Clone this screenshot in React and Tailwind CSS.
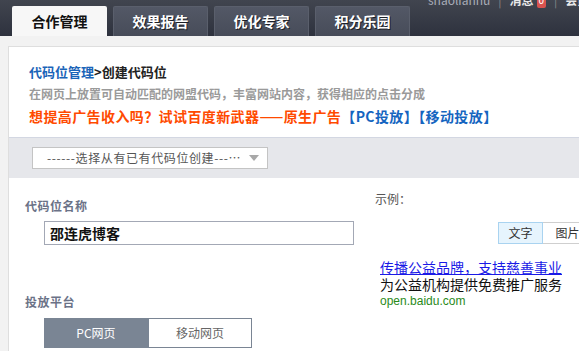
import React from "react";

const F = { fontFamily: '"Noto Sans CJK SC", "Noto Sans", sans-serif' };

function Tab({ label, active }) {
  return active ? (
    <div className="flex h-[30px] w-[95px] items-center justify-center rounded-t-[2px] bg-[#f7f7f7] text-[14px] font-bold text-[#111]">
      {label}
    </div>
  ) : (
    <div className="flex h-[30px] w-[95px] items-center justify-center rounded-t-[2px] border-x border-t border-[#5a5f6c] bg-gradient-to-b from-[#535866] to-[#474c59] text-[14px] font-bold text-white [text-shadow:1px_1px_0_#1c1f27]">
      {label}
    </div>
  );
}

export default function App() {
  return (
    <div className="relative h-[351px] w-[579px] overflow-hidden bg-[#f2f2f2]" style={F}>
      {/* header */}
      <div className="relative h-[36px] bg-gradient-to-b from-[#41454f] to-[#2e323e]">
        <div className="flex h-full items-end gap-[6px] pl-[12px]">
          <Tab label="合作管理" active />
          <Tab label="效果报告" />
          <Tab label="优化专家" />
          <Tab label="积分乐园" />
        </div>
        <div className="absolute left-[428px] top-[-8px] flex items-center gap-[8px] whitespace-nowrap text-[12px] leading-[16px] text-[#a9adb8]">
          <span>shaolianhu</span>
          <span className="text-[#888]">|</span>
          <span className="flex items-center gap-[3px] font-bold text-[#e8e8e8]">
            消息
            <span className="rounded-[2px] bg-[#d9534f] px-[2px] text-[10px] font-normal text-white">0</span>
          </span>
          <span className="text-[#888]">|</span>
          <span className="font-bold text-[#e8e8e8]">会员中心</span>
        </div>
      </div>

      {/* body */}
      <div className="pl-[8px] pt-[10px]">
        <div className="h-[320px] border-l border-t border-[#dedede] bg-white">
          <div className="pl-[20px] pt-[16px]">
            <div className="text-[13px] font-bold leading-[17px] text-[#222]">
              <span className="text-[#1a64b8]">代码位管理</span>&gt;创建代码位
            </div>
            <div className="mt-[6px] text-[12px] font-bold leading-[16px] text-[#9a9a9a]">
              在网页上放置可自动匹配的网盟代码，丰富网站内容，获得相应的点击分成
            </div>
            <div className="mt-[5px] whitespace-nowrap text-[14px] font-bold leading-[18px] tracking-[0.4px] text-[#ff4a00]">
              想提高广告收入吗？试试百度新武器——原生广告
              <span className="text-[#1565c0]">【PC投放】【移动投放】</span>
            </div>
          </div>

          {/* band with select */}
          <div className="mt-[12px] h-[41px] border-t border-[#d3d7e2] bg-[#e6e7eb] pl-[23px] pt-[9px]">
            <div className="flex h-[22px] w-[236px] items-center justify-between border border-[#c4c4c4] bg-white pl-[14px] pr-[8px] text-[12px] text-[#555]">
              <span className="whitespace-nowrap tracking-[0.6px]">------选择从有已有代码位创建---…</span>
              <svg width="10" height="6" viewBox="0 0 10 6">
                <path d="M0 0 L10 0 L5 6 Z" fill="#a8a8a8" />
              </svg>
            </div>
          </div>

          {/* form area */}
          <div className="flex">
            <div className="w-[359px] shrink-0 pl-[16px]">
              <div className="mt-[20px] text-[12px] font-bold leading-[16px] tracking-[0.5px] text-[#6b7287]">代码位名称</div>
              <div className="ml-[19px] mt-[7px] flex h-[24px] w-[310px] items-center border border-[#a3a8b5] pl-[5px] text-[14px] font-bold text-[#111]">
                邵连虎博客
              </div>
              <div className="mt-[49px] text-[12px] font-bold leading-[16px] tracking-[0.5px] text-[#6b7287]">投放平台</div>
              <div className="ml-[19px] mt-[8px] flex h-[30px] w-[208px]">
                <div className="flex w-[104px] items-center justify-center bg-[#7a8594] text-[12px] text-white">PC网页</div>
                <div className="flex flex-1 items-center justify-center border border-[#7a8594] bg-white text-[12px] text-[#666]">移动网页</div>
              </div>
            </div>
            <div className="min-w-0 flex-1">
              <div className="ml-[7px] mt-[13px] text-[12px] leading-[16px] text-[#555]">示例：</div>
              <div className="ml-[130px] mt-[15px] flex h-[22px]">
                <div className="flex w-[45px] shrink-0 items-center justify-center border border-[#a9d3f0] bg-[#e6f4fd] text-[12px] text-[#333]">文字</div>
                <div className="flex w-[50px] shrink-0 items-center justify-center border border-l-0 border-[#cfcfcf] bg-white text-[12px] text-[#333]">图片</div>
              </div>
              <div className="ml-[12px] mt-[15px] text-[14px] leading-[17px]">
                <div className="whitespace-nowrap text-[#1a1ae6] underline">传播公益品牌，支持慈善事业</div>
                <div className="whitespace-nowrap text-[#111]">为公益机构提供免费推广服务</div>
                <div className="text-[12px] text-[#2a8a1a]" style={{ fontFamily: '"Liberation Sans", Arial, sans-serif' }}>open.baidu.com</div>
              </div>
            </div>
          </div>
        </div>
      </div>
    </div>
  );
}
